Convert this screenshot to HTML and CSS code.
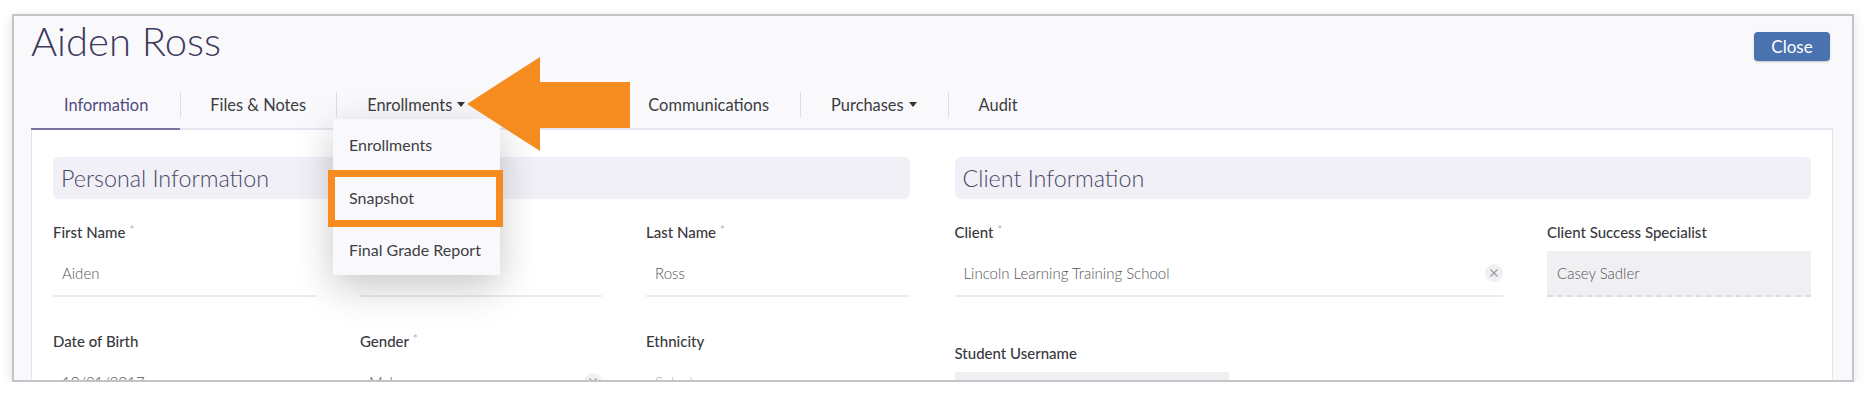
FILE: index.html
```html
<!DOCTYPE html>
<html lang="en">
<head>
<meta charset="utf-8">
<title>Aiden Ross</title>
<link rel="stylesheet" href="styles.css">
</head>
<body>
<div class="frame">
  <div class="header">
    <h1 class="title">Aiden Ross</h1>
    <button class="btn-close">Close</button>
  </div>
  <nav class="tabs">
    <a class="tab active">Information</a>
    <a class="tab tab-files">Files &amp; Notes</a>
    <a class="tab has-caret">Enrollments</a>
    <a class="tab tab-under">Progress</a>
    <a class="tab">Communications</a>
    <a class="tab has-caret">Purchases</a>
    <a class="tab">Audit</a>
  </nav>
  <div class="panel">
    <div class="cols">
      <section class="col">
        <h2 class="sec-head">Personal Information</h2>
        <div class="grid grid-left">
          <div class="field">
            <label class="lbl">First Name<span class="req">*</span></label>
            <div class="input">Aiden</div>
          </div>
          <div class="field">
            <label class="lbl">Middle Name</label>
            <div class="input"></div>
          </div>
          <div class="field">
            <label class="lbl">Last Name<span class="req">*</span></label>
            <div class="input">Ross</div>
          </div>
          <div class="field">
            <label class="lbl">Date of Birth</label>
            <div class="input">10/31/2017</div>
          </div>
          <div class="field">
            <label class="lbl">Gender<span class="req">*</span></label>
            <div class="input"><span class="val">Male</span><span class="clear"><svg viewBox="0 0 18 18" width="18" height="18"><path d="M5.5 5.5l7 7M12.5 5.5l-7 7" stroke="#9a9aa0" stroke-width="1.2" fill="none"/></svg></span></div>
          </div>
          <div class="field">
            <label class="lbl">Ethnicity</label>
            <div class="input placeholder">Select...</div>
          </div>
        </div>
      </section>
      <section class="col">
        <h2 class="sec-head">Client Information</h2>
        <div class="grid grid-right">
          <div class="field">
            <label class="lbl">Client<span class="req">*</span></label>
            <div class="input"><span class="val">Lincoln Learning Training School</span><span class="clear"><svg viewBox="0 0 18 18" width="18" height="18"><path d="M5.5 5.5l7 7M12.5 5.5l-7 7" stroke="#9a9aa0" stroke-width="1.2" fill="none"/></svg></span></div>
          </div>
          <div class="field">
            <label class="lbl">Client Success Specialist</label>
            <div class="input readonly">Casey Sadler</div>
          </div>
        </div>
        <div class="field field-user">
          <label class="lbl">Student Username</label>
          <div class="input readonly"></div>
        </div>
      </section>
    </div>
  </div>

  <ul class="menu">
    <li class="menu-item">Enrollments</li>
    <li class="menu-item">Snapshot</li>
    <li class="menu-item">Final Grade Report</li>
  </ul>
  <div class="highlight"></div>
  <svg class="arrow" viewBox="0 0 163 94" width="163" height="94">
    <polygon points="0,47 73,0 73,25 163,25 163,71 73,71 73,94" fill="#f68b1f"/>
  </svg>
</div>
</body>
</html>
```

FILE: styles.css
```css
* { box-sizing: border-box; }

body {
  margin: 0;
  background: #ffffff;
  font-family: Lato, "Open Sans", "Liberation Sans", sans-serif;
  color: #333;
}

.frame {
  position: relative;
  margin: 14px 0 0 12px;
  width: 1842px;
  height: 368px;
  border: 2px solid #c4c4c8;
  background: #f9f9fc;
  overflow: hidden;
  box-shadow: 0 3px 10px rgba(70, 70, 110, 0.16);
}

.header {
  display: flex;
  justify-content: space-between;
  align-items: flex-start;
  height: 63px;
  padding: 2px 22px 0 17px;
}

.title {
  margin: 0;
  font-size: 40px;
  line-height: 46px;
  font-weight: 300;
  color: #3d3a5e;
}

.btn-close {
  margin-top: 14px;
  width: 76px;
  height: 29px;
  border: none;
  border-radius: 4px;
  background: #4a72ae;
  color: #ffffff;
  font-family: Lato, "Open Sans", sans-serif;
  font-size: 17px;
  font-weight: 400;
  box-shadow: 0 1px 2px rgba(0, 0, 0, 0.2);
  padding: 0;
}

.tabs {
  display: flex;
  margin: 0 19px 0 17px;
  height: 51px;
  border-bottom: 2px solid #e6e6ee;
}

.tab {
  position: relative;
  display: block;
  height: 49px;
  line-height: 51px;
  padding: 0 31px;
  font-size: 16.4px;
  color: #3c3c40;
  white-space: nowrap;
}

.tab-files { padding: 0 30px; }

.tab-under {
  width: 121px;
  padding: 0;
  text-align: center;
}

.tab + .tab::before {
  content: "";
  position: absolute;
  left: 0;
  top: 13px;
  height: 25px;
  border-left: 1px solid #dcdce2;
}

.tab.active {
  color: #4f4a7e;
  height: 51px;
  padding: 0 32px 0 33px;
  border-bottom: 2px solid #7b75a6;
  margin-bottom: -2px;
}

.has-caret::after {
  content: "";
  display: inline-block;
  margin-left: 5px;
  vertical-align: middle;
  border-left: 4px solid transparent;
  border-right: 4px solid transparent;
  border-top: 5px solid #333;
  position: relative;
  top: -2px;
}

.panel {
  margin: 0 19px 0 17px;
  height: 260px;
  background: #ffffff;
  border-left: 1px solid #e4e4ec;
  border-right: 1px solid #e4e4ec;
  padding: 27px 21px 0;
}

.cols {
  display: grid;
  grid-template-columns: 1fr 1fr;
  column-gap: 45px;
}

.sec-head {
  margin: 0;
  height: 42px;
  line-height: 42px;
  padding-left: 8px;
  border-radius: 6px;
  background: #f1f0f7;
  font-size: 23.3px;
  font-weight: 300;
  color: #4a4868;
}

.grid {
  display: grid;
  column-gap: 44px;
  row-gap: 34px;
  margin-top: 23px;
}

.grid-left { grid-template-columns: 263px 242px 1fr; }
.grid-right { grid-template-columns: 1fr 264px; }

.lbl {
  display: block;
  font-size: 15px;
  line-height: 20px;
  font-weight: 500;
  color: #38383d;
}

.req {
  color: #b0b0b6;
  font-size: 11px;
  font-weight: 400;
  vertical-align: top;
  margin-left: 4px;
  position: relative;
  top: -2px;
}

.input {
  display: flex;
  align-items: center;
  justify-content: space-between;
  margin-top: 9px;
  height: 46px;
  padding: 0 0 0 9px;
  border-bottom: 2px solid #ebebf1;
  font-size: 15px;
  font-weight: 300;
  color: #555559;
}

.placeholder { color: #b5b5bb; }

.clear {
  display: flex;
  width: 18px;
  height: 18px;
  border-radius: 50%;
  background: #f0f0f3;
}

.readonly {
  background: #f0f0f3;
  border-bottom: 2px dashed #dcdce1;
  padding-left: 10px;
}

.field-user {
  margin-top: 46px;
  width: 274px;
}

.menu {
  position: absolute;
  left: 319px;
  top: 103px;
  width: 167px;
  margin: 0;
  padding: 0;
  list-style: none;
  background: #f9f9fd;
  box-shadow: 0 12px 36px rgba(0, 0, 0, 0.22);
}

.menu-item {
  height: 52px;
  line-height: 52px;
  padding-left: 16px;
  font-size: 16px;
  color: #3e3e42;
  white-space: nowrap;
}

.menu-item + .menu-item { border-top: 1px solid #ececf1; }

.highlight {
  position: absolute;
  left: 314px;
  top: 154px;
  width: 175px;
  height: 57px;
  border: 7px solid #f68b1f;
}

.arrow {
  position: absolute;
  left: 453px;
  top: 41px;
  display: block;
}
```
